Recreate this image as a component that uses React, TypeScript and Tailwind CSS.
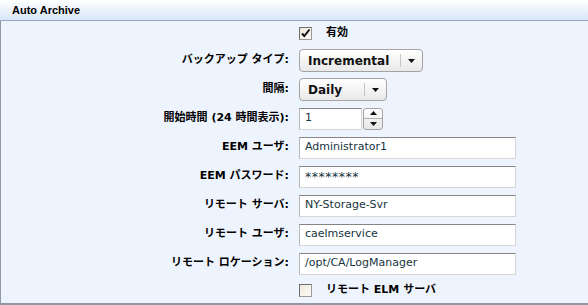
import React from "react";

const labelFont = { fontFamily: '"DejaVu Sans", "Noto Sans CJK JP", sans-serif' };

function Label({ children }: { children: React.ReactNode }) {
  return (
    <div className="w-[288px] shrink-0 text-right text-[11px] font-bold text-black whitespace-nowrap" style={labelFont}>
      {children}
    </div>
  );
}

function Row({ h = "h-[29px]", children }: { h?: string; children: React.ReactNode }) {
  return <div className={`flex items-center ${h}`}>{children}</div>;
}

function TextInput({ value, big = false }: { value: string; big?: boolean }) {
  return (
    <div className="ml-[10px] flex h-[22px] w-[217px] items-center border border-t-[#858585] border-l-[#b8b8b8] border-r-[#d6d6d6] border-b-[#d6d6d6] bg-white pl-[5px] text-[11px] text-[#163440]">
      {big ? <span className="text-[12.5px] tracking-[0.5px] pt-[2px]">{value}</span> : value}
    </div>
  );
}

function Arrow({ up = false }: { up?: boolean }) {
  return (
    <svg width="7" height="4" viewBox="0 0 7 4" className="block">
      {up ? <polygon points="0,4 7,4 3.5,0" fill="#111" /> : <polygon points="0,0 7,0 3.5,4" fill="#111" />}
    </svg>
  );
}

function Dropdown({ value, width, textW }: { value: string; width: string; textW: string }) {
  return (
    <div className={`ml-[10px] flex h-[23px] ${width} items-center rounded-[4px] border border-[#a3a3a3] bg-gradient-to-b from-white to-[#e9e9e9]`}>
      <div className={`${textW} pl-[8px] text-[12px] font-bold text-[#111]`} style={labelFont}>
        {value}
      </div>
      <div className="h-[13px] w-px bg-[#c4c4c4]" />
      <div className="flex flex-1 items-center justify-center">
        <Arrow />
      </div>
    </div>
  );
}

function Checkbox({ checked }: { checked: boolean }) {
  return (
    <div className="ml-[10px] flex h-[13px] w-[13px] items-center justify-center border border-t-[#6e6e6e] border-l-[#6e6e6e] border-r-[#9a9a9a] border-b-[#9a9a9a] bg-gradient-to-br from-[#efe9dc] to-[#fbfaf6]">
      {checked && (
        <svg width="11" height="11" viewBox="0 0 11 11">
          <path d="M2 5.5 L4.3 8 L9.5 1.5" stroke="#111" strokeWidth="2" fill="none" />
        </svg>
      )}
    </div>
  );
}

export default function App() {
  return (
    <div className="h-[305px] w-[588px] overflow-hidden bg-[#eef4fd]" style={{ fontFamily: '"DejaVu Sans", "Noto Sans CJK JP", sans-serif' }}>
      <div className="flex h-[21px] items-center border-b border-[#9aa9bb] bg-gradient-to-b from-white to-[#d9e6f6] pl-[12px]">
        <span className="text-[11px] font-bold text-black" style={{ fontFamily: '"Liberation Sans", Arial, sans-serif' }}>
          Auto Archive
        </span>
      </div>
      <div className="h-[284px] border-l border-b-2 border-l-[#8e98a6] border-b-[#8e98a6] bg-[#eef4fd]">
        <Row h="h-[25px]">
          <div className="w-[288px] shrink-0" />
          <Checkbox checked />
          <span className="ml-[14px] text-[11px] font-bold text-black" style={labelFont}>有効</span>
        </Row>
        <Row>
          <Label>バックアップ タイプ:</Label>
          <Dropdown value="Incremental" width="w-[124px]" textW="w-[100px]" />
        </Row>
        <Row>
          <Label>間隔:</Label>
          <Dropdown value="Daily" width="w-[88px]" textW="w-[64px]" />
        </Row>
        <Row>
          <Label>開始時間 (24 時間表示):</Label>
          <div className="ml-[10px] flex h-[22px] w-[63px] items-center border border-t-[#858585] border-l-[#b8b8b8] border-r-[#d6d6d6] border-b-[#d6d6d6] bg-white pl-[5px] text-[11px] text-[#163440]">
            1
          </div>
          <div className="ml-[1px] flex h-[22px] w-[20px] flex-col rounded-[3px] border border-[#a3a3a3] bg-gradient-to-b from-white to-[#e6e6e6]">
            <div className="flex flex-1 items-center justify-center border-b border-[#b0b0b0]">
              <Arrow up />
            </div>
            <div className="flex flex-1 items-center justify-center">
              <Arrow />
            </div>
          </div>
        </Row>
        <Row>
          <Label>EEM ユーザ:</Label>
          <TextInput value="Administrator1" />
        </Row>
        <Row>
          <Label>EEM パスワード:</Label>
          <TextInput value="********" big />
        </Row>
        <Row>
          <Label>リモート サーバ:</Label>
          <TextInput value="NY-Storage-Svr" />
        </Row>
        <Row>
          <Label>リモート ユーザ:</Label>
          <TextInput value="caelmservice" />
        </Row>
        <Row>
          <Label>リモート ロケーション:</Label>
          <TextInput value="/opt/CA/LogManager" />
        </Row>
        <Row h="h-[25px]">
          <div className="w-[288px] shrink-0" />
          <Checkbox checked={false} />
          <span className="ml-[14px] text-[11px] font-bold text-black" style={labelFont}>リモート ELM サーバ</span>
        </Row>
      </div>
    </div>
  );
}
